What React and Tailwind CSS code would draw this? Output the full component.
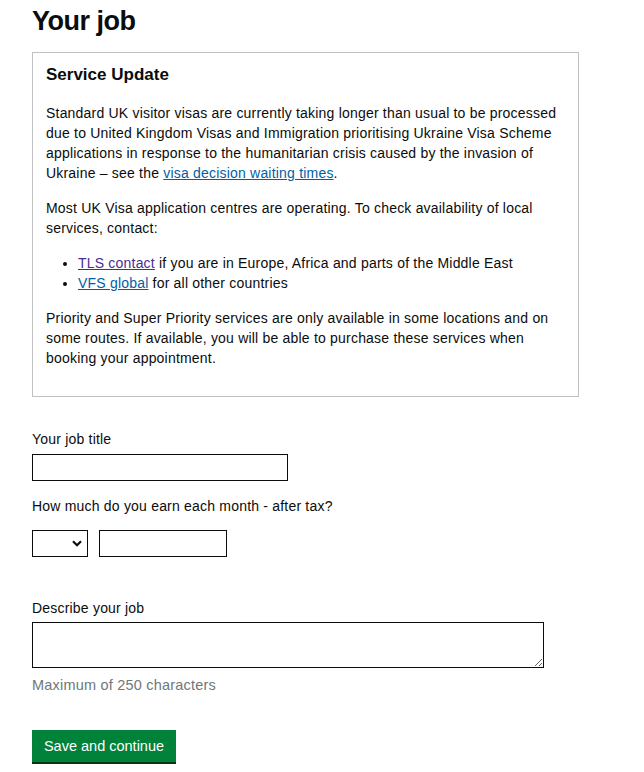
import React from "react";

export default function App() {
  return (
    <div className="min-h-screen bg-white text-[#0b0c0c] pl-8 pt-[5px]" style={{ fontFamily: '"Liberation Sans", Arial, sans-serif' }}>
      <h1 className="text-[27px] font-bold leading-[32px] tracking-[-0.5px]">Your job</h1>

      <div className="mt-[15px] w-[547px] border border-[#bfc1c3] pl-[13px] pr-[13px] pt-[10px] pb-[28px] text-[14px] leading-[20px] tracking-[0.2px]">
        <h2 className="text-[17px] font-bold leading-[24px] tracking-normal">Service Update</h2>
        <p className="mt-[16px]">
          Standard UK visitor visas are currently taking longer than usual to be processed due to United Kingdom Visas and Immigration prioritising Ukraine Visa Scheme applications in response to the humanitarian crisis caused by the invasion of Ukraine – see the{" "}
          <a href="#" className="text-[#005ea5] underline">visa decision waiting times</a>.
        </p>
        <p className="mt-[15px]">
          Most UK Visa application centres are operating. To check availability of local services, contact:
        </p>
        <ul className="mt-[15px] list-disc pl-8">
          <li>
            <a href="#" className="text-[#4c2c92] underline">TLS contact</a> if you are in Europe, Africa and parts of the Middle East
          </li>
          <li>
            <a href="#" className="text-[#005ea5] underline">VFS global</a> for all other countries
          </li>
        </ul>
        <p className="mt-[15px]">
          Priority and Super Priority services are only available in some locations and on some routes. If available, you will be able to purchase these services when booking your appointment.
        </p>
      </div>

      <div className="text-[14px] leading-[20px] tracking-[0.2px]">
        <label className="mt-[32px] block">Your job title</label>
        <input type="text" className="mt-[5px] block h-[27px] w-[256px] border border-[#0b0c0c] outline-none" />

        <label className="mt-[15px] block">How much do you earn each month - after tax?</label>
        <div className="mt-[14px] flex gap-[11px]">
          <div className="relative h-[27px] w-[56px]">
            <select className="h-full w-full appearance-none border border-[#0b0c0c] bg-white outline-none"></select>
            <svg className="pointer-events-none absolute left-[40px] top-[10px]" width="10" height="7" viewBox="0 0 10 7">
              <path d="M1 1.2 L5 5.2 L9 1.2" fill="none" stroke="#0b0c0c" strokeWidth="2.2" />
            </svg>
          </div>
          <input type="text" className="block h-[27px] w-[128px] border border-[#0b0c0c] outline-none" />
        </div>

        <label className="mt-[41px] block">Describe your job</label>
        <textarea className="mt-[4px] block h-[46px] w-[512px] border border-[#0b0c0c] outline-none"></textarea>
        <p className="mt-[7px] text-[14.5px] text-[#6f777b]">Maximum of 250 characters</p>

        <button className="mt-[35px] block h-[32px] w-[144px] bg-[#00823b] text-[14.5px] tracking-normal text-white shadow-[0_2px_0_#003618]">
          Save and continue
        </button>
      </div>
    </div>
  );
}
